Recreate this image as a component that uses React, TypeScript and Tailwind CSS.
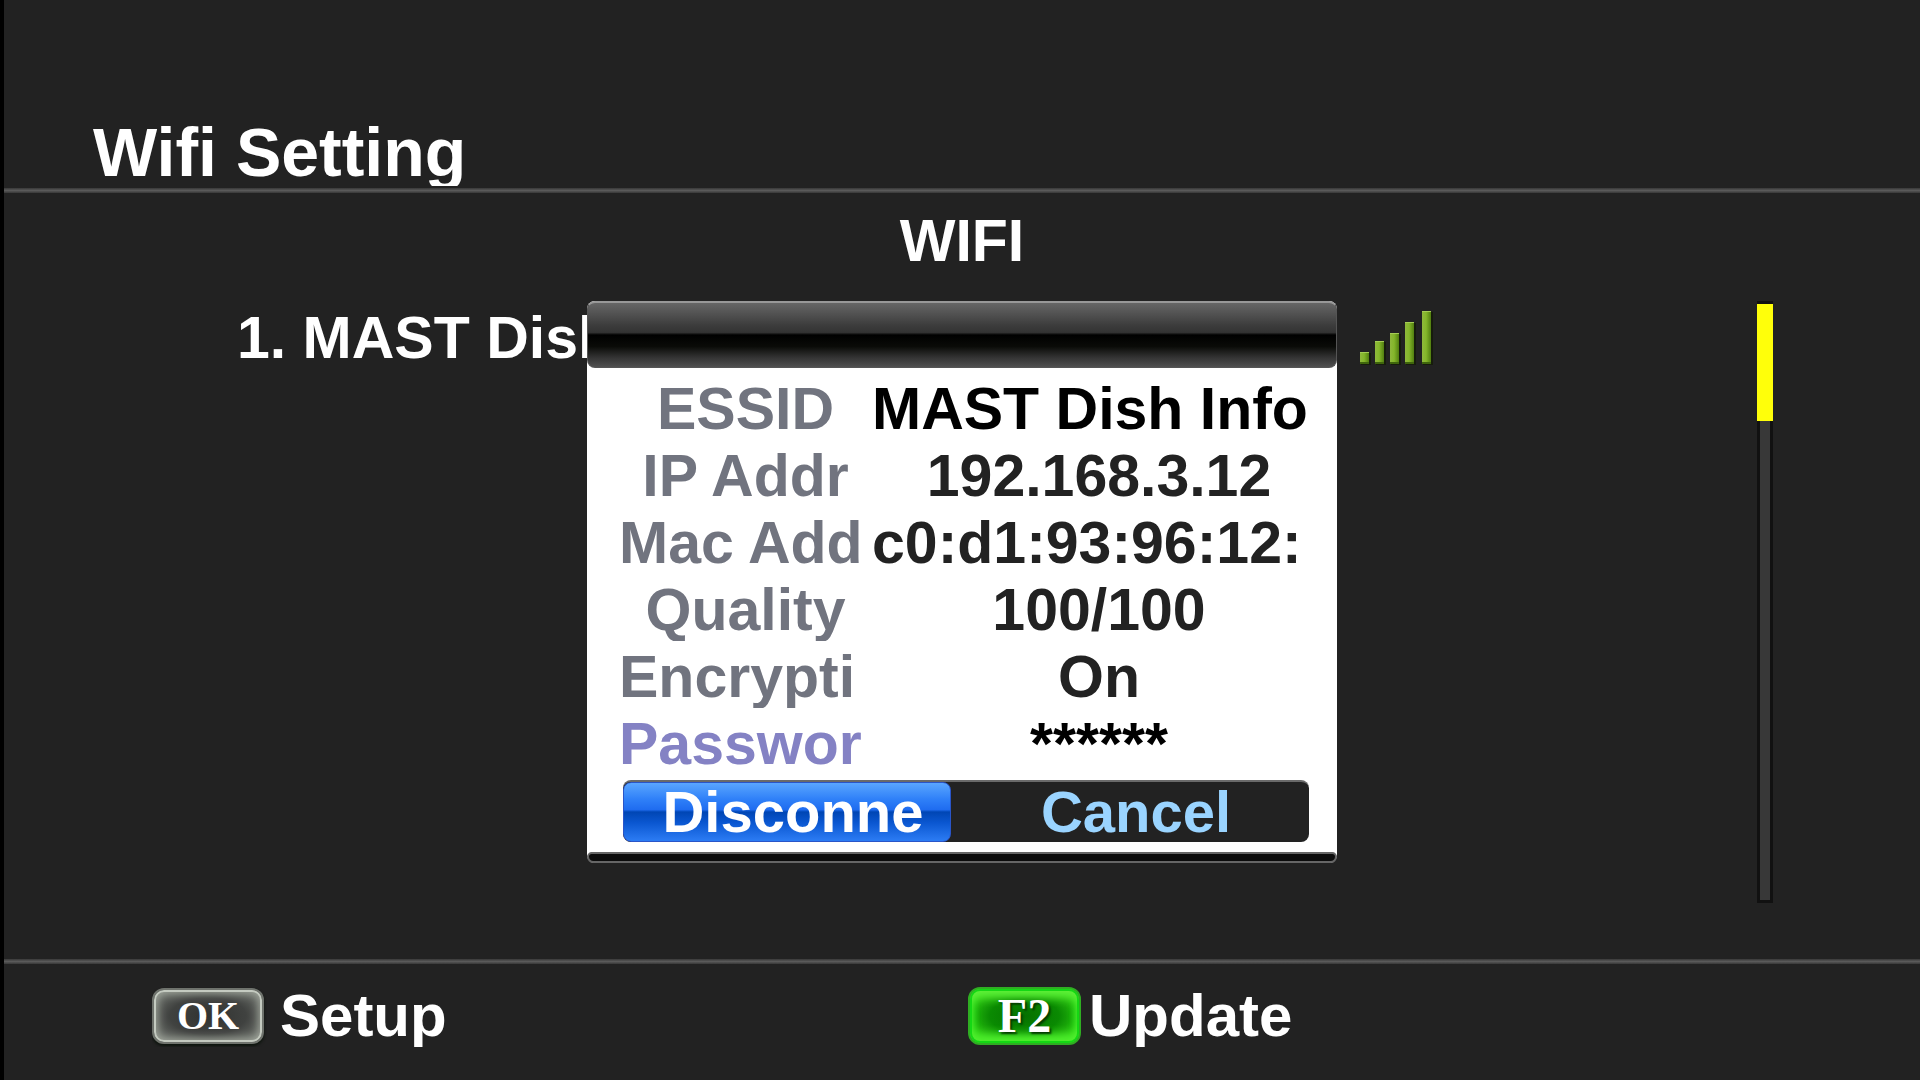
import React from "react";

const sans = "font-['Liberation_Sans',Arial,sans-serif]";
const serif = "font-['Liberation_Serif','Times_New_Roman',serif]";

const details = [
  { label: "ESSID", value: "MAST Dish Info", labelStyle: "text-center", valueStyle: "text-left text-black" },
  { label: "IP Addr", value: "192.168.3.12", labelStyle: "text-center", valueStyle: "text-center text-[#222222]" },
  { label: "Mac Add", value: "c0:d1:93:96:12:", labelStyle: "text-left", valueStyle: "text-left text-[#222222]" },
  { label: "Quality", value: "100/100", labelStyle: "text-center overflow-hidden", valueStyle: "text-center text-[#222222]" },
  { label: "Encrypti", value: "On", labelStyle: "text-left overflow-hidden", valueStyle: "text-center text-[#222222]" },
];

function Rule() {
  return (
    <div className="h-[5px] shrink-0 bg-linear-to-b from-[#383838] via-[#5a5a5a] to-[#383838]" />
  );
}

function SignalIcon() {
  const bars = [
    { x: 0, h: 12 },
    { x: 15, h: 23 },
    { x: 30, h: 31 },
    { x: 45, h: 42 },
    { x: 62, h: 53 },
  ];
  return (
    <svg width="73" height="56" viewBox="0 0 73 56" role="img" aria-label="Signal strength" className="shrink-0">
      <defs>
        <linearGradient id="bar" x1="0" y1="0" x2="1" y2="0">
          <stop offset="0" stopColor="#8fb83c" />
          <stop offset="0.45" stopColor="#84b62a" />
          <stop offset="1" stopColor="#527f10" />
        </linearGradient>
      </defs>
      {bars.map((b) => (
        <g key={b.x}>
          <rect x={b.x + 1} y={55 - b.h} width="10" height={b.h} fill="#161c0c" />
          <rect x={b.x} y={54 - b.h} width="9" height={b.h} fill="url(#bar)" />
          <rect x={b.x} y={54 - b.h} width="9" height="1" fill="#a5cc55" />
          <rect x={b.x} y="52" width="9" height="2" fill="#3f650c" />
        </g>
      ))}
    </svg>
  );
}

function NetworkDialog() {
  return (
    <div
      role="dialog"
      aria-label="Network details"
      className="absolute left-1/2 top-0 w-[750px] -translate-x-1/2 rounded-lg bg-white text-[59px] font-bold leading-[62px]"
    >
      <div className="h-[67px] rounded-lg border border-t-2 border-[#555555] border-t-[#989898] bg-[linear-gradient(to_bottom,#666666_0%,#3c3c3c_35%,#333333_46%,#000000_50%,#0a0b08_68%,#333333_85%,#505050_100%)]" />
      <div className="flex flex-col gap-[5px] pb-[5px] pl-8 pr-[11px] pt-[10px]">
        <dl className="flex flex-col gap-[5px]">
          {details.map((d) => (
            <div key={d.label} className="grid grid-cols-[253px_1fr]">
              <dt className={`whitespace-nowrap text-[#71747f] ${d.labelStyle}`}>{d.label}</dt>
              <dd className={`whitespace-nowrap ${d.valueStyle}`}>{d.value}</dd>
            </div>
          ))}
        </dl>
        <div className="grid grid-cols-[253px_1fr]">
          <label htmlFor="password" className="text-[#8482c4]">
            Passwor
          </label>
          <input
            id="password"
            type="text"
            readOnly
            value="******"
            className="h-[62px] w-full min-w-0 bg-transparent text-center text-black outline-none"
          />
        </div>
      </div>
      <div className="mb-[10px] ml-9 mr-7 flex h-[62px] overflow-hidden rounded-lg border-t-2 border-[#6a6a6a] bg-[#222222] text-[58px] leading-[58px]">
        <button
          type="button"
          className="w-[328px] rounded-lg border border-[#2a55c8] bg-[linear-gradient(to_bottom,#5aa6ff_0%,#2f80f8_28%,#1f6cf0_46%,#0046b4_50%,#0a56d0_68%,#2c7cf4_100%)] pl-3 text-white"
        >
          Disconne
        </button>
        <button type="button" className="flex-1 pl-3 text-[#9ad4ff]">
          Cancel
        </button>
      </div>
      <div className="h-[11px] rounded-b-lg rounded-t-md border-2 border-[#666666] bg-[#0c0c0c]" />
    </div>
  );
}

export default function App() {
  return (
    <div className={`flex min-h-screen flex-col border-l-4 border-black bg-[#222222] font-bold text-white ${sans}`}>
      <header className="pb-0.5 pl-[89px] pt-[118px]">
        <h1 className="overflow-hidden text-[68px] leading-[68px]">Wifi Setting</h1>
      </header>
      <Rule />
      <main className="flex flex-1 flex-col pt-[17px] text-[59px] leading-[62px]">
        <h2 className="text-center">WIFI</h2>
        <div className="relative mt-[29px] flex items-start pr-[147px]">
          <ul id="networks" className="flex-1 pl-[233px] pr-[324px] pt-[6px]">
            <li className="flex items-center justify-between">
              <span className="whitespace-nowrap">1. MAST Dish Info</span>
              <SignalIcon />
            </li>
          </ul>
          <div
            role="scrollbar"
            aria-controls="networks"
            aria-valuenow={0}
            className="h-[602px] w-4 border-[3px] border-[#111111] bg-[#383838]"
          >
            <div className="-mx-[3px] h-[117px] bg-[#ffff0a]" />
          </div>
          <NetworkDialog />
        </div>
      </main>
      <Rule />
      <footer className="grid grid-cols-2 pb-[33px] pl-[148px] pr-[136px] pt-[21px] text-[60px] leading-[62px]">
        <button type="button" className="flex items-center gap-4 overflow-hidden text-left">
          <kbd
            className={`flex h-[56px] w-[112px] items-center justify-center rounded-xl border-2 border-[#6f736d] bg-[radial-gradient(ellipse_at_center,#303230_0%,#404240_50%,#6c706a_85%)] text-[40px] font-bold text-white shadow-[inset_0_0_0_2px_#c4cac0,inset_0_0_10px_3px_#a4aaa0,0_2px_3px_#0c140c] ${serif}`}
          >
            OK
          </kbd>
          Setup
        </button>
        <button type="button" className="flex items-center gap-2 overflow-hidden text-left">
          <kbd
            className={`flex h-[58px] w-[113px] items-center justify-center rounded-xl border-2 border-[#2fae22] bg-[radial-gradient(ellipse_at_center,#067000_0%,#0a8a02_45%,#38d818_85%)] text-[48px] font-bold text-white shadow-[inset_0_0_0_2px_#14d814,inset_0_8px_10px_#62f03a,inset_0_-8px_10px_#54ee30,inset_0_0_10px_3px_#0ee00e] [text-shadow:2px_2px_2px_#043c00] ${serif}`}
          >
            F2
          </kbd>
          Update
        </button>
      </footer>
    </div>
  );
}
